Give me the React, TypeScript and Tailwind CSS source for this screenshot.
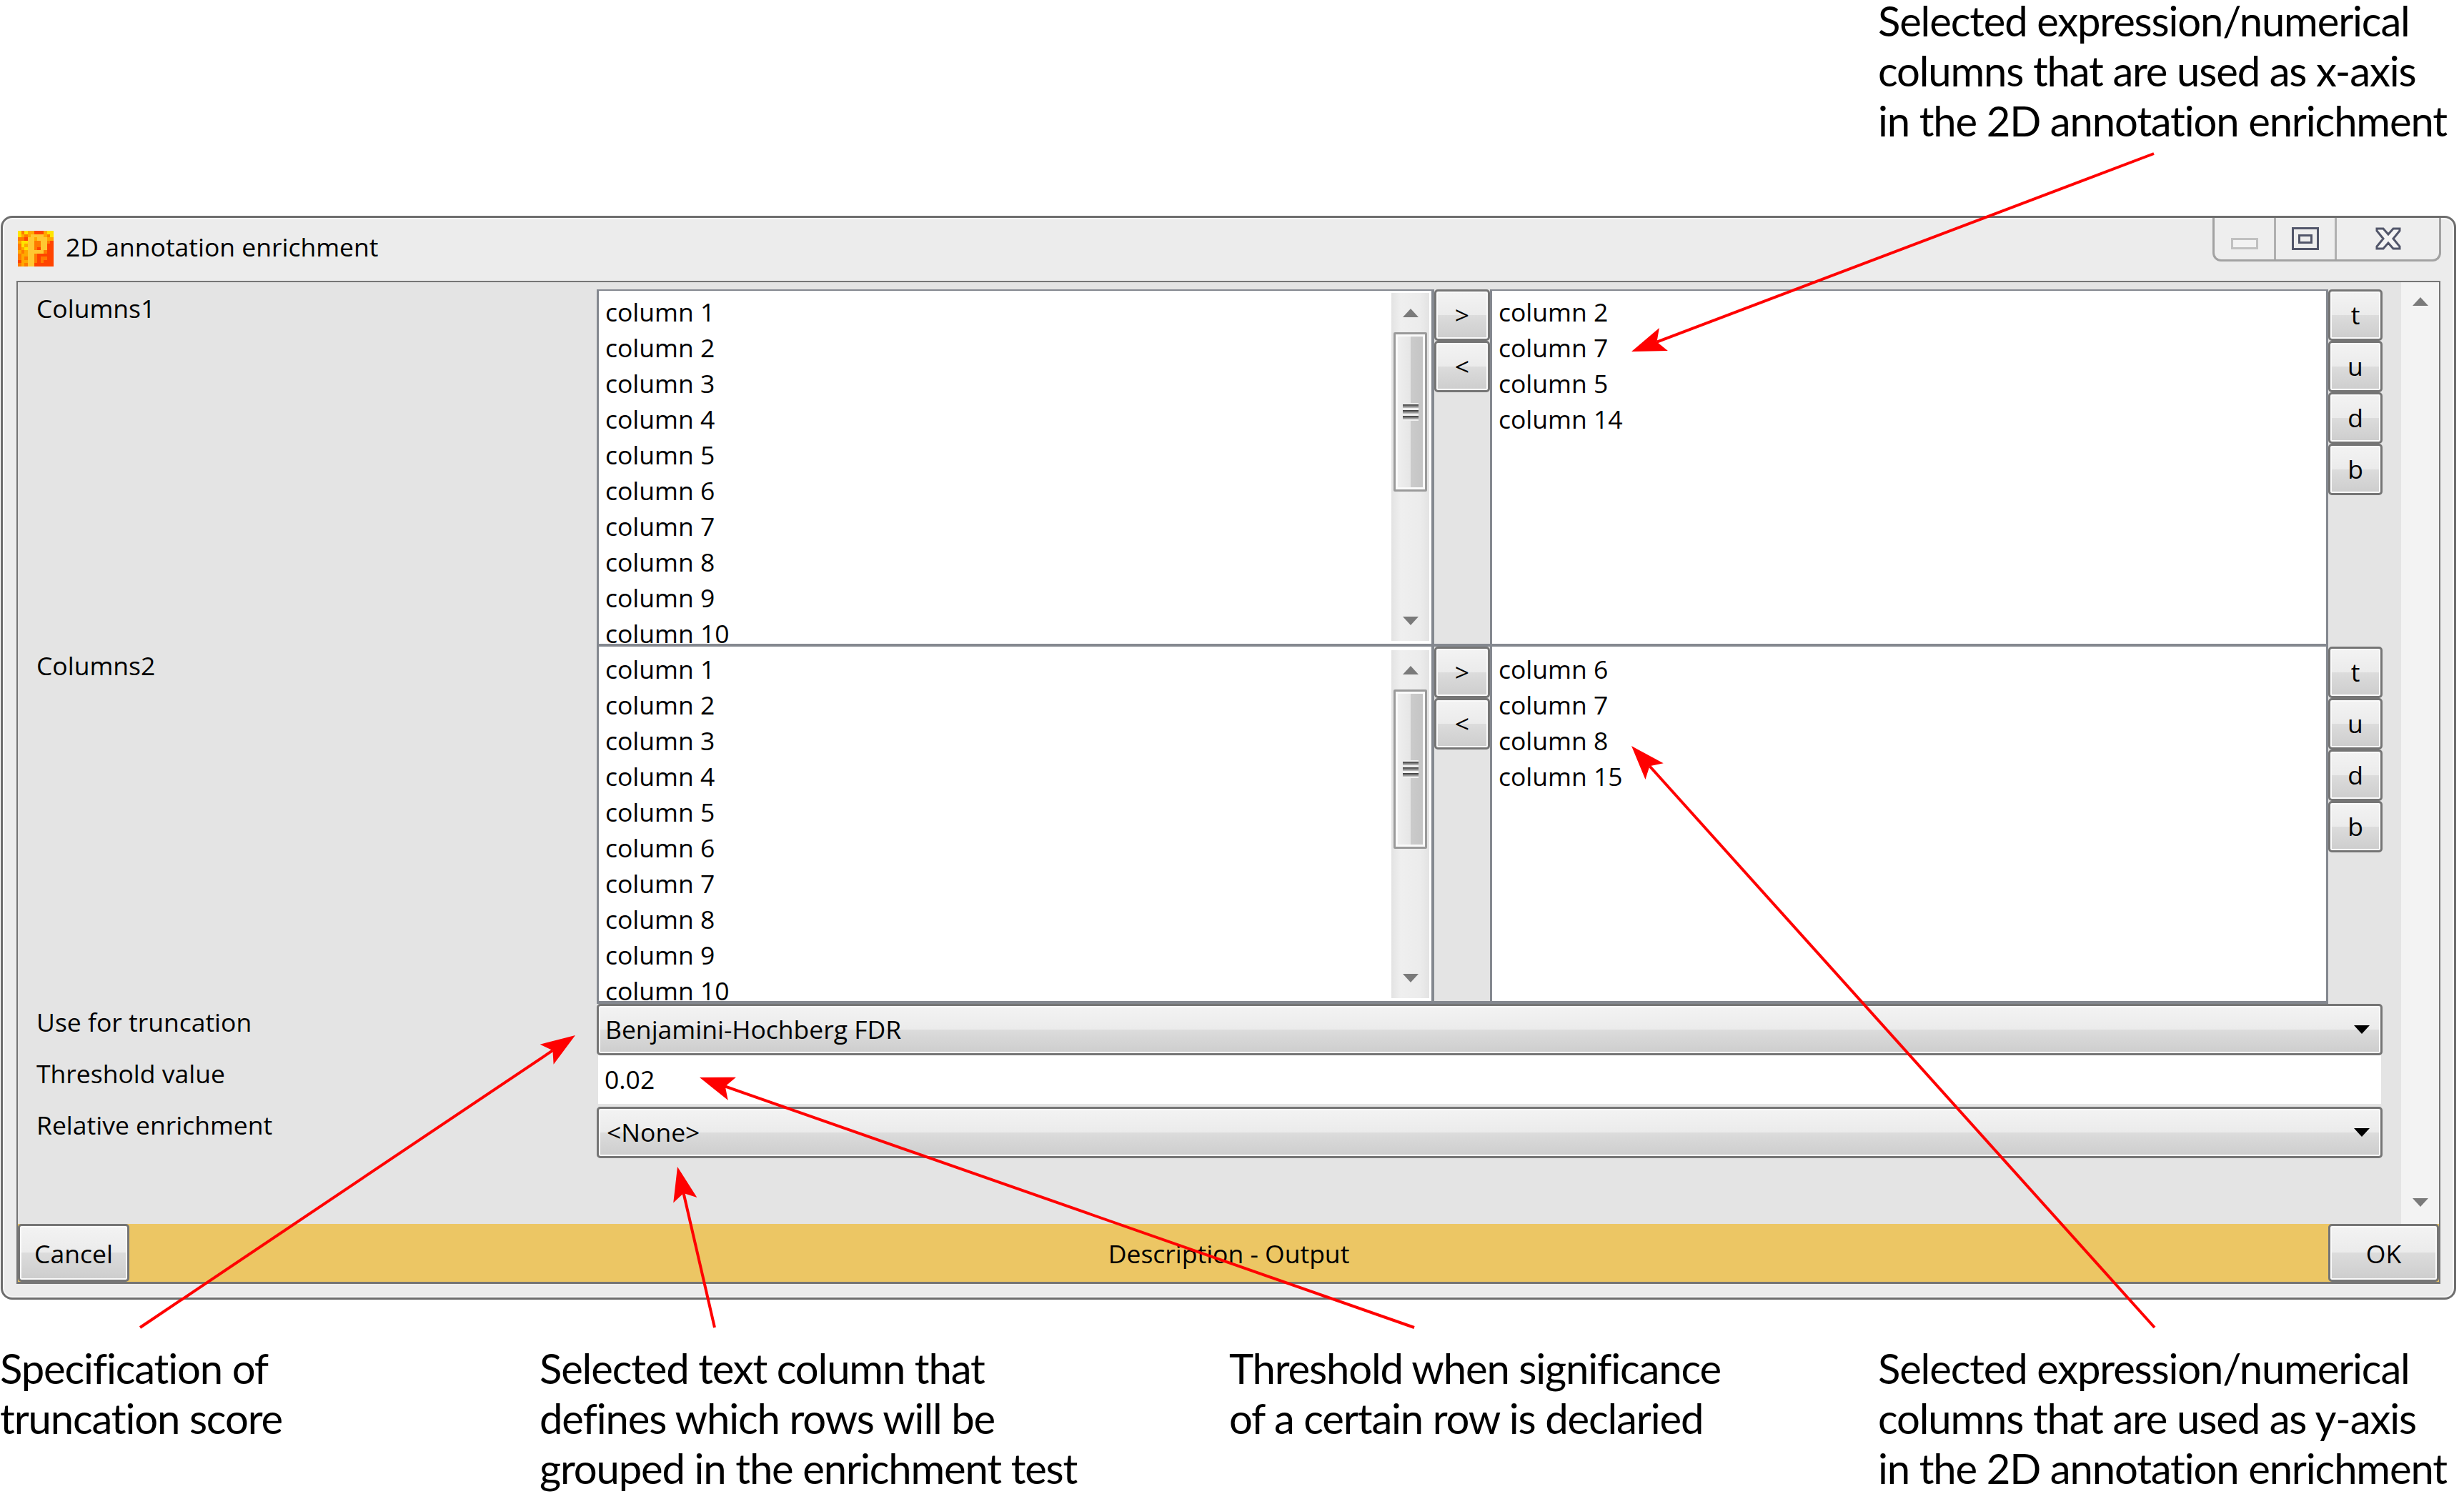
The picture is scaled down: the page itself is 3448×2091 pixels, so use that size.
import React from 'react';

const items = Array.from({ length: 10 }, (_, i) => `column ${i + 1}`);

const btnBg =
  'bg-[linear-gradient(#f3f3f3,#ebebeb_50%,#dcdcdc_50%,#cdcdcd)] border-[3px] border-[#757575] rounded-[5px] shadow-[inset_0_0_0_2px_#fafafa]';

function Arrow({ from, to }: { from: [number, number]; to: [number, number] }) {
  const dx = to[0] - from[0];
  const dy = to[1] - from[1];
  const len = Math.hypot(dx, dy);
  const ux = dx / len;
  const uy = dy / len;
  const bx = to[0] - ux * 48;
  const by = to[1] - uy * 48;
  const nx = to[0] - ux * 38;
  const ny = to[1] - uy * 38;
  const pts = [
    `${to[0]},${to[1]}`,
    `${bx - uy * 17},${by + ux * 17}`,
    `${nx},${ny}`,
    `${bx + uy * 17},${by - ux * 17}`,
  ].join(' ');
  return (
    <g>
      <line x1={from[0]} y1={from[1]} x2={nx} y2={ny} stroke="#ff0000" strokeWidth={4} />
      <polygon points={pts} fill="#ff0000" />
    </g>
  );
}

function Tri({ up, color = '#7a7a7a', w = 22 }: { up?: boolean; color?: string; w?: number }) {
  return (
    <svg width={w} height={12} viewBox="0 0 22 12" className="block">
      <polygon points={up ? '11,0 22,12 0,12' : '0,0 22,0 11,12'} fill={color} />
    </svg>
  );
}

function ScrollBar() {
  return (
    <div className="w-[53px] shrink-0 flex flex-col items-center bg-[linear-gradient(90deg,#e3e3e3,#efefef_25%,#ececec_75%,#e3e3e3)]">
      <div className="h-[55px] w-full flex items-center justify-center">
        <Tri up />
      </div>
      <div className="h-[223px] w-[47px] border-[3px] border-[#9a9a9a] rounded-[2px] shadow-[inset_0_0_0_3px_#fafafa] bg-[linear-gradient(90deg,#f0f0f0,#e6e6e6_50%,#cbcbcb_50%,#c4c4c4)] flex items-center justify-center">
        <div className="flex flex-col gap-[3px] w-[22px] py-[2px] bg-[#efefef]">
          <div className="h-[5px] bg-[linear-gradient(#333333,#c8c8c8)]" />
          <div className="h-[5px] bg-[linear-gradient(#333333,#c8c8c8)]" />
          <div className="h-[5px] bg-[linear-gradient(#333333,#c8c8c8)]" />
        </div>
      </div>
      <div className="flex-1 w-full flex items-end justify-center pb-[22px]">
        <Tri />
      </div>
    </div>
  );
}

function ListItems({ values, first }: { values: string[]; first?: boolean }) {
  return (
    <div className={`flex-1 min-w-0 overflow-hidden pl-[9px] ${first ? 'pt-[4px]' : 'pt-[6px]'}`}>
      {values.map((v) => (
        <div key={v} className="h-[50px] leading-[50px] whitespace-nowrap">
          {v}
        </div>
      ))}
    </div>
  );
}

function SmallButton({ label, className }: { label: string; className?: string }) {
  return (
    <div className={`h-[72px] flex items-center justify-center ${btnBg} ${className ?? ''}`}>
      {label}
    </div>
  );
}

function SelectionRow({ label, selected, first }: { label: string; selected: string[]; first?: boolean }) {
  const top = first ? 'border-t-[2px]' : '';
  return (
    <div className="flex h-[500px]">
      <div className="w-[810px] shrink-0 pl-[26px] pt-[8px] leading-[36px]">{label}</div>
      <div className={`w-[1172px] shrink-0 flex bg-white border-[#84888f] border-l-[3px] border-r-[4px] border-b-[4px] ${top}`}>
        <ListItems values={items} first={first} />
        <div className={`flex mr-[3px] ${first ? 'mt-[3px]' : 'mt-[5px]'} mb-[4px]`}>
          <ScrollBar />
        </div>
      </div>
      <div className="w-[78px] shrink-0 border-b-[4px] border-[#84888f]">
        <SmallButton label=">" />
        <SmallButton label="<" />
      </div>
      <div className={`w-[1173px] shrink-0 bg-white border-[#84888f] border-l-[3px] border-r-[3px] border-b-[4px] ${top}`}>
        <ListItems values={selected} first={first} />
      </div>
      <div className="w-[76px] shrink-0">
        {['t', 'u', 'd', 'b'].map((b) => (
          <SmallButton key={b} label={b} />
        ))}
      </div>
    </div>
  );
}

function FieldRow({ label, children }: { label: string; children: React.ReactNode }) {
  return (
    <div className="flex h-[72px]">
      <div className="w-[810px] shrink-0 pl-[26px] pt-[7px] leading-[36px]">{label}</div>
      <div className="w-[2499px] shrink-0">{children}</div>
    </div>
  );
}

function Select({ value, inset }: { value: string; inset: string }) {
  return (
    <div className={`h-full flex items-center justify-between pr-[15px] ${inset} ${btnBg}`}>
      <span>{value}</span>
      <Tri color="#000000" />
    </div>
  );
}

function WindowControls() {
  return (
    <div className="flex h-[61px] w-[320px] border-[3px] border-t-0 border-[#a2a2a2] rounded-b-[12px] bg-[#eeeeee]">
      <div className="w-[86px] flex justify-center pt-[28px] border-r-[3px] border-[#b0b0b0]">
        <div className="w-[38px] h-[16px] border-[3px] border-[#c0c0c0] bg-[#f2f2f2]" />
      </div>
      <div className="w-[85px] flex justify-center pt-[13px] border-r-[3px] border-[#b0b0b0]">
        <div className="w-[38px] h-[32px] border-[3px] border-[#52566a] flex items-center justify-center">
          <div className="w-[20px] h-[13px] border-[3px] border-[#52566a]" />
        </div>
      </div>
      <div className="flex-1 flex justify-center pt-[13px]">
        <svg width="36" height="32" viewBox="0 0 36 32">
          <path d="M2 2h9l7 8 7-8h9v3l-9 11 9 11v3h-9l-7-8-7 8H2v-3l9-11L2 5z" fill="#f4f4f4" stroke="#52566a" strokeWidth="3" />
        </svg>
      </div>
    </div>
  );
}

const iconColors: Record<string, string> = {
  R: '#ff4400',
  O: '#ff7a00',
  A: '#ffa800',
  Y: '#ffe400',
  P: '#ffc832',
};

const iconRows = [
  'YOYAARRRAYY',
  'YAOAPPPPAOY',
  'OORPPAPPPAA',
  'AYYPPOOPPOR',
  'OYAPPOOPPRR',
  'OAYPPORPPRR',
  'AOAPPPPPORR',
  'OAAPPORRRRR',
  'OAOPPOROORR',
  'RAAPPORORRR',
  'OAOPPRRRRRR',
];

function AppIcon() {
  return (
    <svg width="50" height="50" viewBox="0 0 11 11" shapeRendering="crispEdges" className="shrink-0">
      {iconRows.map((row, y) =>
        row.split('').map((c, x) => <rect key={`${x}-${y}`} x={x} y={y} width="1" height="1" fill={iconColors[c]} />),
      )}
    </svg>
  );
}

export default function App() {
  return (
    <div className="relative w-[3448px] h-[2091px] overflow-hidden bg-white text-black font-['Open_Sans',sans-serif] text-[35.5px]">
      <div className="h-[308px] pl-[2628px] -mt-[6px] font-['Lato',sans-serif] text-[58px] leading-[70px] tracking-[-1.15px] whitespace-nowrap">
        <div>Selected expression/numerical</div>
        <div>columns that are used as x-axis</div>
        <div>in the 2D annotation enrichment</div>
      </div>

      <div className="ml-px w-[3436px] h-[1517px] border-[3px] border-[#6e6e6e] rounded-[16px] bg-[#ececec] flex flex-col shadow-[inset_0_0_0_2px_#f6f6f6]">
        <div className="h-[88px] flex items-start pl-[21px] relative">
          <div className="mt-[18px] flex items-center gap-[17px]">
            <AppIcon />
            <span className="-mt-[4px]">2D annotation enrichment</span>
          </div>
          <div className="absolute right-[18px] top-0">
            <WindowControls />
          </div>
        </div>

        <div className="mx-[19px] w-[3392px] h-[1404px] border-[2px] border-b-[3px] border-[#757575] bg-[#e4e4e4] flex flex-col">
          <div className="flex-1 flex min-h-0">
            <div className="flex-1 pt-[10px]">
              <SelectionRow label="Columns1" selected={['column 2', 'column 7', 'column 5', 'column 14']} first />
              <SelectionRow label="Columns2" selected={['column 6', 'column 7', 'column 8', 'column 15']} />
              <FieldRow label="Use for truncation">
                <Select value="Benjamini-Hochberg FDR" inset="pl-[9px]" />
              </FieldRow>
              <FieldRow label="Threshold value">
                <div className="h-[68px] ml-[2px] mr-[2px] bg-white pl-[9px] flex items-center">0.02</div>
              </FieldRow>
              <FieldRow label="Relative enrichment">
                <Select value="<None>" inset="pl-[11px]" />
              </FieldRow>
            </div>
            <div className="w-[53px] shrink-0 bg-[#f3f3f3] flex flex-col justify-between items-center pt-[21px] pb-[24px]">
              <Tri up />
              <Tri />
            </div>
          </div>
          <div className="h-[81px] shrink-0 bg-[#ecc664] flex items-stretch justify-between">
            <div className={`w-[156px] pt-[3px] flex items-center justify-center ${btnBg}`}>Cancel</div>
            <div className="flex-1 pt-[3px] flex items-center justify-center">Description - Output</div>
            <div className={`w-[155px] pt-[3px] flex items-center justify-center ${btnBg}`}>OK</div>
          </div>
        </div>
      </div>

      <div className="grid grid-cols-[755px_965px_908px_1fr] pt-[61px] font-['Lato',sans-serif] text-[58px] leading-[70px] tracking-[-1.15px] whitespace-nowrap">
        <div>
          <div>Specification of</div>
          <div>truncation score</div>
        </div>
        <div>
          <div>Selected text column that</div>
          <div>defines which rows will be</div>
          <div>grouped in the enrichment test</div>
        </div>
        <div>
          <div>Threshold when significance</div>
          <div>of a certain row is declaried</div>
        </div>
        <div>
          <div>Selected expression/numerical</div>
          <div>columns that are used as y-axis</div>
          <div>in the 2D annotation enrichment</div>
        </div>
      </div>

      {/* callout arrows lie over the dialog */}
      <svg className="absolute left-0 top-0 pointer-events-none" width={3448} height={2091}>
        <Arrow from={[3014, 215]} to={[2283, 492]} />
        <Arrow from={[3015, 1858]} to={[2283, 1044]} />
        <Arrow from={[1979, 1858]} to={[979, 1508]} />
        <Arrow from={[1000, 1858]} to={[948, 1633]} />
        <Arrow from={[196, 1858]} to={[805, 1449]} />
      </svg>
    </div>
  );
}
